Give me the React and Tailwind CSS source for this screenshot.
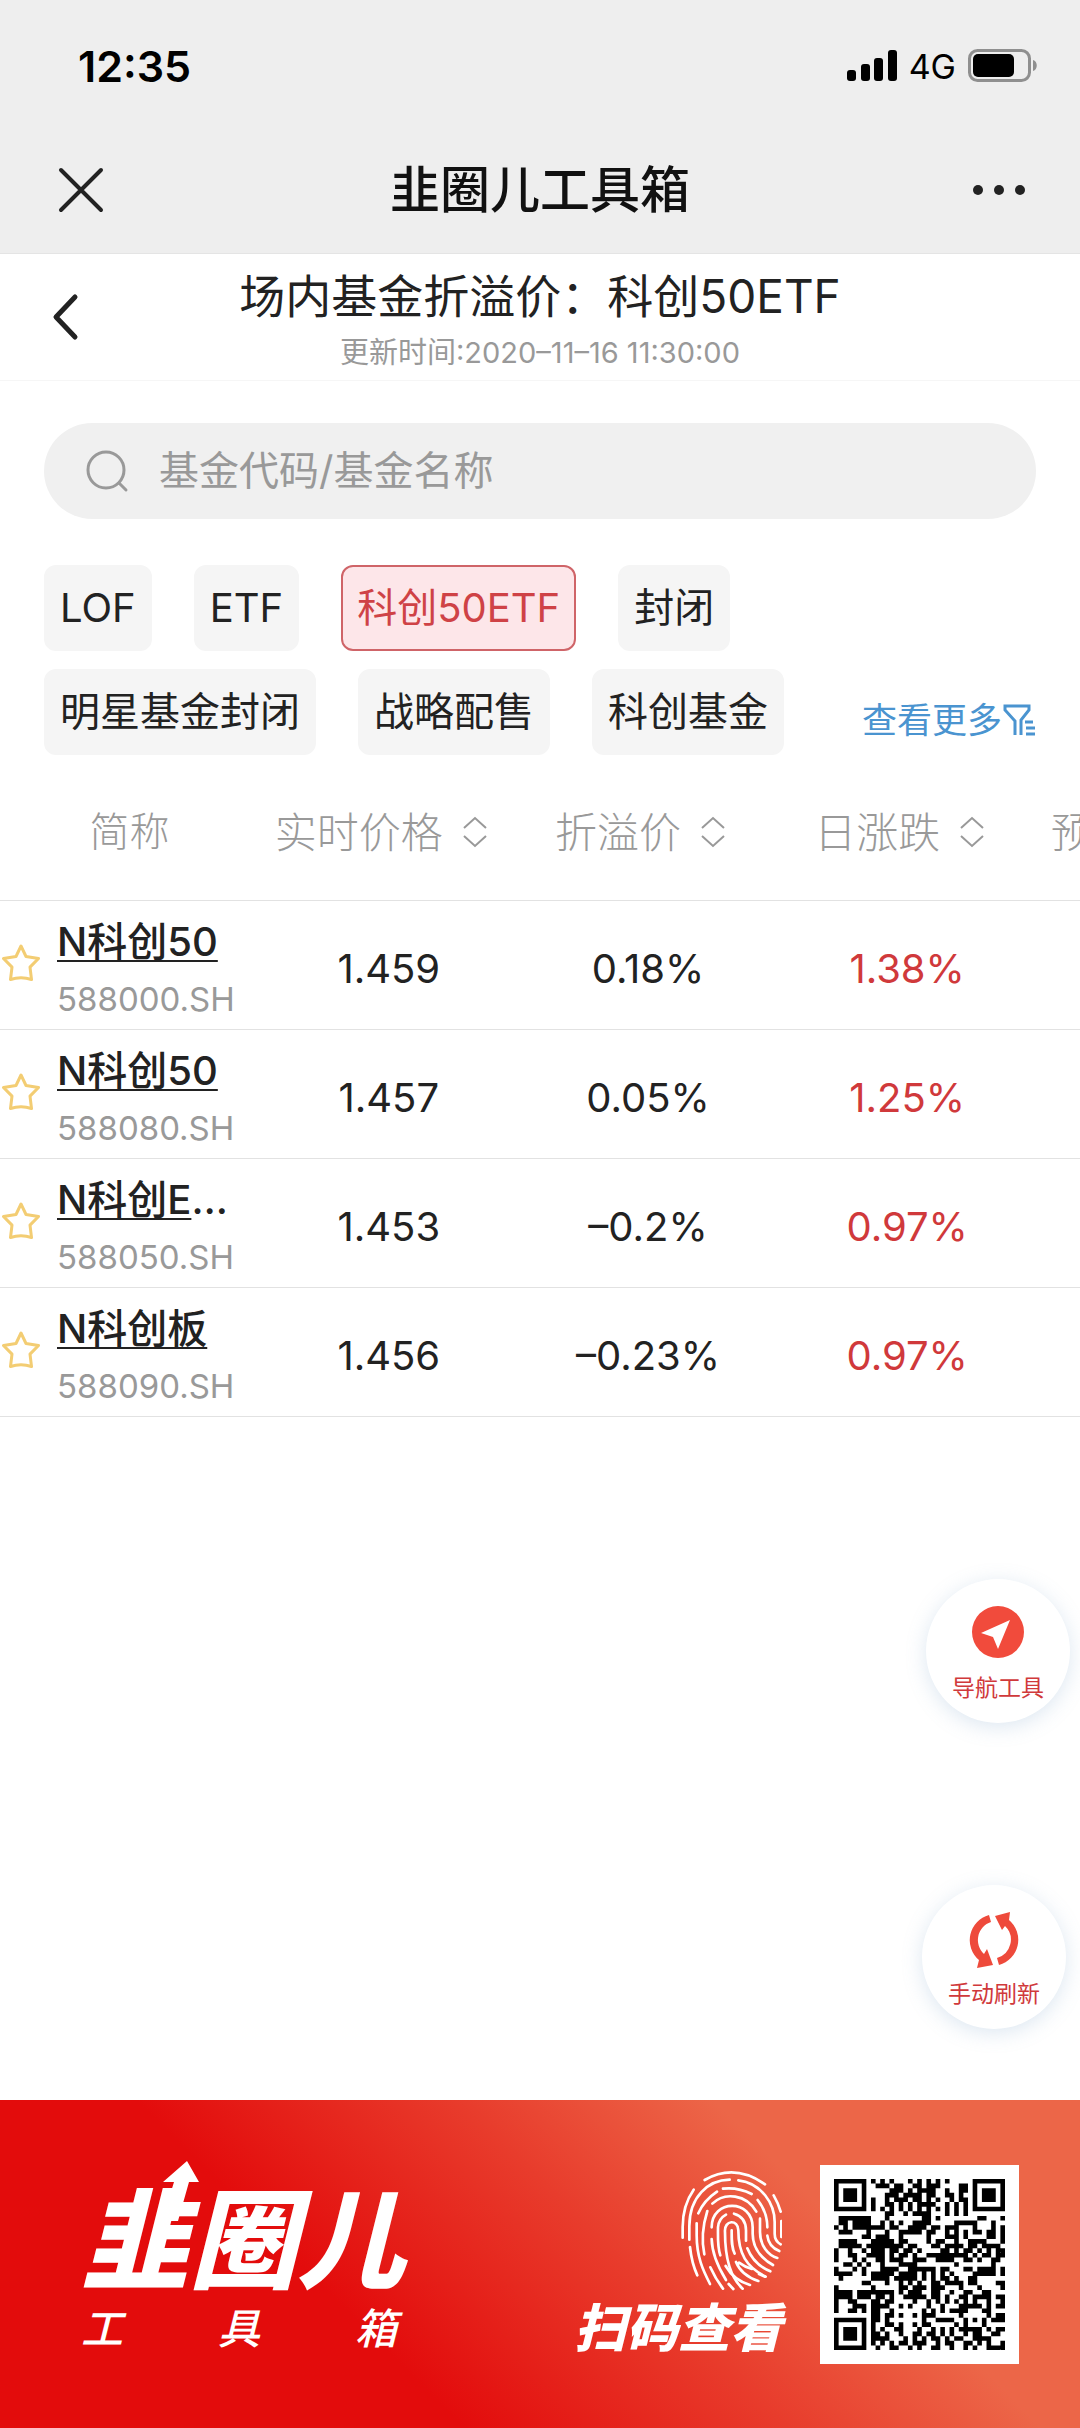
import { useState } from 'react'

const categories = ['LOF', 'ETF', '科创50ETF', '封闭', '明星基金封闭', '战略配售', '科创基金']

const columns = ['实时价格', '折溢价', '日涨跌']

const funds = [
  { name: 'N科创50', code: '588000.SH', price: '1.459', premium: '0.18%', change: '1.38%' },
  { name: 'N科创50', code: '588080.SH', price: '1.457', premium: '0.05%', change: '1.25%' },
  { name: 'N科创ETF', code: '588050.SH', price: '1.453', premium: '–0.2%', change: '0.97%' },
  { name: 'N科创板', code: '588090.SH', price: '1.456', premium: '–0.23%', change: '0.97%' },
]

const qrRows = [
  '#######.#.#.#...#.#.#.#.#.....#######',
  '#.....#..###.##..##.###....##.#.....#',
  '#.###.#.....###.#.####..#..##.#.###.#',
  '#.###.#....###.####.##..##.#..#.###.#',
  '#.###.#.#..#.###.##.#.#..#.##.#.###.#',
  '#.....#.#..##.#.#.####..#.#.#.#.....#',
  '#######.#.#.#.#.#.#.#.#.#.#.#.#######',
  '...........##..#.####...#.#.#........',
  '.#######...#.......##.#........##...#',
  '.##.####..#.#.#..####.....#####...#..',
  '#.#.#######.##..####.##.###...#...#.#',
  '.###...#...#..#####.##..#.#.#.##.##.#',
  '......##.###..#.....#...###.#....##.#',
  '.####...#####.##....#.##..#..####...#',
  '.#####.########.##...##.####.##.####.',
  '#..#..#.###.##.##.#....##.#.##.#.#.##',
  '#..##..####.#.##.#..#########.#.##.##',
  '#...#.#..##.###..###..####..##.#..##.',
  '..##.#.#..#...####........#.......#..',
  '#...#.#...####..######.##...##.####.#',
  '####..#.#####.####.#.#.#.#....#####.#',
  '.#......####.#####.#.#.##.#..##......',
  '......##...#..#.#.#..##.####.##....##',
  '#.......#.....##.###.###...#...#....#',
  '####.########.#.###..##..#..##..##...',
  '####.###.##.#..#####.##.#..##.####.##',
  '#..##...##.##....#..#.#.#.#.#.#..#..#',
  '#...###.####..#.#...#..#...#####.#.##',
  '#..##.#.##..#......#.#.#.####...##...',
  '........##.##.#..#.###.....#.....#.##',
  '#######.##.#.......#..####..#.#.#.###',
  '#.....#.#..##.#..#.##.....#.#...#....',
  '#.###.#.#.#..##...#..#.#.#.#####.#.##',
  '#.###.#.##.#..#..##.##.#.#..#.##..##.',
  '#.###.#.####...#.#.#.##.#.##..####...',
  '#.....#.#.#.#.##.###..#.##..##.#.#..#',
  '#######..#..##..#.#..##..#..#.#..####',
]

function SignalIcon() {
  return (
    <svg className="w-[50px] h-[32px]" viewBox="0 0 50 32" fill="#000">
      <rect x="0" y="20" width="9" height="11" rx="3" />
      <rect x="14" y="14" width="9" height="17" rx="3" />
      <rect x="27" y="8" width="9" height="23" rx="3" />
      <rect x="41" y="0" width="9" height="31" rx="3" />
    </svg>
  )
}

function BatteryIcon() {
  return (
    <svg className="w-[70px] h-[34px]" viewBox="0 0 70 34">
      <rect x="1.5" y="1.5" width="60" height="30" rx="8" fill="none" stroke="#8f8f8f" strokeWidth="3" />
      <rect x="5" y="5" width="41" height="23" rx="5" fill="#000" />
      <path d="M65 11c5 1 5 10 0 11z" fill="#8f8f8f" />
    </svg>
  )
}

function SortIcon() {
  return (
    <svg className="w-6 h-8" viewBox="0 0 24 32" fill="none" stroke="#999" strokeWidth="2">
      <path d="M1 12 12 2l11 10M1 20l11 10 11-10" />
    </svg>
  )
}

function StarIcon() {
  return (
    <svg className="w-[38px] h-[38px]" viewBox="0 0 38 38" fill="none" stroke="#f3cd73" strokeWidth="3" strokeLinejoin="round">
      <path d="M19 2l5 10.500 12.500 2-8.500 8.600 1.500 12.400Q19 32 8.500 35.500L10 23.100 1.500 14.500l12.500-2z" />
    </svg>
  )
}

function FilterIcon() {
  return (
    <svg className="w-[34px] h-8" viewBox="0 0 34 32" fill="none" stroke="#4a94d0" strokeWidth="3">
      <path d="M13 31V17L3 6V2h24v4l-8 10v15" />
      <path d="M23 18h8M24 24h9M24 30h9" />
    </svg>
  )
}

function NavIcon() {
  return (
    <svg className="w-[54px] h-[54px]" viewBox="0 0 54 54">
      <circle cx="27" cy="27" r="26" fill="#f14b3c" />
      <path d="M39 15 10 28l12 4 5 12z" fill="#fff" />
    </svg>
  )
}

function RefreshIcon() {
  return (
    <svg className="w-[54px] h-[58px]" viewBox="0 0 54 58" fill="#ee4a3b">
      <path d="M22 4A26 26 0 0 0 12 49L10 57l16-3-6-16-3 5A19 19 0 0 1 24 11z" />
      <path d="M32 54A26 26 0 0 0 42 9l1-8-15 4 7 14 3-4A19 19 0 0 1 30 47z" />
    </svg>
  )
}

function FingerprintIcon() {
  return (
    <svg className="w-[102px] h-[122px]" viewBox="66 56 306 366" fill="none" stroke="#fff" strokeWidth="8" strokeLinecap="round">
      <path d="M140 89Q230 38 321 102" />
      <path d="M94 268V228C94 140 150 89 215 88" />
      <path d="M241 90C310 98 350 160 350 215V250Q350 272 368 282" />
      <path d="M74 262V230Q74 165 107 118" />
      <path d="M347 135Q360 157 368 184M370 212V260" />
      <path d="M121 189Q138 150 177 124M195 115Q240 110 281 131M299 149Q328 185 328 231" />
      <path d="M163 160C200 124 265 132 295 184" />
      <path d="M139 312C130 270 136 220 148 182" />
      <path d="M161 231C161 145 284 145 284 231V250C284 300 320 330 345 344" />
      <path d="M187 315C178 290 180 265 180 231Q182 205 204 193" />
      <path d="M228 190Q264 200 264 240V271" />
      <path d="M306 205V245C306 285 330 315 358 323" />
      <path d="M328 256Q332 290 364 302" />
      <path d="M116 219V255C116 320 135 360 156 401" />
      <path d="M96 290Q101 338 118 375" />
      <path d="M161 266C162 310 180 350 204 389" />
      <path d="M157 351Q172 385 195 415" />
      <path d="M254 415C215 380 201 320 201 245C198 207 241 207 241 240C241 310 265 350 323 379" />
      <path d="M221 240C221 270 220 290 230 310" />
      <path d="M268 294C280 325 305 350 337 363" />
      <path d="M203 347Q228 390 276 404M234 335Q250 375 301 392M243 337Q260 350 282 356M212 401 226 416M303 371l18 8" />
    </svg>
  )
}

function QrCode() {
  const d = qrRows
    .map((row, y) => row.split('').map((cell, x) => (cell === '#' ? `M${x} ${y}h1v1h-1z` : '')).join(''))
    .join('')

  return (
    <svg className="w-[171px] h-[171px]" viewBox="0 0 37 37" role="img" aria-label="二维码">
      <path d={d} />
    </svg>
  )
}

function FundRow({ fund }) {
  const [starred, setStarred] = useState(false)

  return (
    <tr className="h-[129px] border-b border-[#e2e2e2]">
      <td className="p-0">
        <div className="pt-[13px] flex items-center">
          <button type="button" aria-label="自选" aria-pressed={starred} onClick={() => setStarred(!starred)} className="w-[57px] pb-4 pl-[2px]">
            <StarIcon />
          </button>
          <div className="w-[184px]">
            <a href="#" className="block truncate text-[40px] leading-[56px] font-medium underline underline-offset-4 decoration-2">
              {fund.name}
            </a>
            <div className="text-[33px] leading-[58px] text-[#999]">{fund.code}</div>
          </div>
        </div>
      </td>
      <td className="p-0 pt-2 text-center text-[40px]">{fund.price}</td>
      <td className="p-0 pt-2 text-center text-[40px]">{fund.premium}</td>
      <td className="p-0 pt-2 text-center text-[40px] text-[#d0393b]">{fund.change}</td>
      <td></td>
    </tr>
  )
}

function App() {
  const [active, setActive] = useState('科创50ETF')
  const [keyword, setKeyword] = useState('')

  return (
    <div className="bg-white text-[#222] overflow-hidden font-[Inter,'Noto_Sans_CJK_SC',sans-serif]">
      {/* Status bar and title */}
      <header className="bg-[#eeeeee] border-b border-[#e4e4e4]">
        <div className="h-[132px] pl-[78px] pr-[42px] flex items-center justify-between text-black">
          <span className="text-[43px] font-semibold">12:35</span>
          <div className="flex items-center gap-3">
            <SignalIcon />
            <span className="text-[34px]">4G</span>
            <BatteryIcon />
          </div>
        </div>
        <div className="h-[121px] px-[54px] pb-[5px] flex items-center justify-between">
          <button type="button" aria-label="关闭">
            <svg className="w-[54px] h-[54px]" viewBox="0 0 54 54" fill="none" stroke="#222" strokeWidth="4" strokeLinecap="round">
              <path d="M7 7l40 40M47 7 7 47" />
            </svg>
          </button>
          <h1 className="text-[50px] leading-[60px] font-medium text-[#111]">韭圈儿工具箱</h1>
          <button type="button" aria-label="更多">
            <svg className="w-[54px] h-[12px]" viewBox="0 0 54 12" fill="#222">
              <circle cx="6" cy="6" r="5" />
              <circle cx="27" cy="6" r="5" />
              <circle cx="48" cy="6" r="5" />
            </svg>
          </button>
        </div>
      </header>

      {/* Page heading */}
      <div className="h-[127px] px-[48px] flex items-center border-b border-[#f6f6f6]">
        <button type="button" aria-label="返回" className="w-9">
          <svg className="w-9 h-[54px]" viewBox="0 0 36 54" fill="none" stroke="#222" strokeWidth="5" strokeLinecap="round" strokeLinejoin="round">
            <path d="M27 7 8 27l19 20" />
          </svg>
        </button>
        <div className="flex-1 pt-2 pr-9 text-center">
          <h2 className="text-[46px] leading-[64px]">场内基金折溢价：科创50ETF</h2>
          <p className="text-[29px] leading-[50px] text-[#999]">更新时间:2020–11–16 11:30:00</p>
        </div>
      </div>

      {/* Search */}
      <div className="px-[44px] pt-[42px]">
        <label className="h-[96px] px-10 flex items-center gap-[29px] rounded-full bg-[#f0f0f0]">
          <svg className="w-[46px] h-[46px]" viewBox="0 0 46 46" fill="none" stroke="#999" strokeWidth="3" strokeLinecap="round">
            <circle cx="22" cy="22" r="18" />
            <path d="M35 35l7 7" />
          </svg>
          <input
            type="text"
            aria-label="搜索基金"
            value={keyword}
            onChange={(e) => setKeyword(e.target.value)}
            placeholder="基金代码/基金名称"
            className="flex-1 bg-transparent text-[40px] outline-none placeholder:text-[#999]"
          />
        </label>
      </div>

      {/* Categories */}
      <div className="pt-[46px] px-[44px] flex items-end justify-between">
        <div className="w-[748px] flex flex-wrap gap-x-[42px] gap-y-[18px]">
          {categories.map((name) => (
            <button
              key={name}
              type="button"
              onClick={() => setActive(name)}
              className={
                name === active
                  ? 'h-[86px] px-[14px] rounded-xl border-2 border-[#cf6468] bg-[#fde6e9] text-[40px] text-[#cf4246]'
                  : 'h-[86px] px-[14px] rounded-xl border-2 border-[#f5f5f5] bg-[#f5f5f5] text-[40px]'
              }
            >
              {name}
            </button>
          ))}
        </div>
        <a href="#" className="h-[70px] flex items-center whitespace-nowrap text-[35px] text-[#4a94d0]">
          查看更多
          <FilterIcon />
        </a>
      </div>

      {/* Fund table */}
      <table className="w-full table-fixed border-collapse">
        <colgroup>
          <col className="w-[24%]" />
          <col className="w-[24%]" />
          <col className="w-[24%]" />
          <col className="w-[24%]" />
          <col />
        </colgroup>
        <thead>
          <tr className="h-[145px] border-b border-[#e2e2e2] text-[#999]">
            <th className="p-0 pt-[10px] text-[40px] font-light">简称</th>
            {columns.map((title) => (
              <th key={title} className="p-0 pt-[10px] pr-[16px] font-light">
                <button type="button" className="inline-flex items-center gap-[20px] text-[42px] whitespace-nowrap">
                  {title}
                  <SortIcon />
                </button>
              </th>
            ))}
            <th className="p-0 pt-[10px] pl-[14px] text-left text-[42px] font-light whitespace-nowrap overflow-hidden">预</th>
          </tr>
        </thead>
        <tbody>
          {funds.map((fund) => (
            <FundRow key={fund.code} fund={fund} />
          ))}
        </tbody>
      </table>

      {/* Round shortcuts */}
      <div className="pt-[162px] pb-[71px] pr-[10px] flex flex-col items-end gap-[162px]">
        <button type="button" className="w-[144px] h-[144px] pt-2 rounded-full bg-white shadow-[0_4px_20px_rgba(120,160,200,0.25)] flex flex-col items-center justify-center gap-3">
          <NavIcon />
          <span className="text-[23px] leading-[34px] text-[#d0393b]">导航工具</span>
        </button>
        <button type="button" className="w-[144px] h-[144px] mr-1 pt-2 rounded-full bg-white shadow-[0_4px_20px_rgba(120,160,200,0.25)] flex flex-col items-center justify-center gap-2">
          <RefreshIcon />
          <span className="text-[23px] leading-[34px] text-[#d0393b]">手动刷新</span>
        </button>
      </div>

      {/* Banner */}
      <footer className="h-[329px] pl-[81px] pr-[61px] flex items-center justify-between text-white bg-[linear-gradient(45deg,#e30c0c_33%,#e83c2c_56%,#ec6648_74%)]">
        <div className="relative w-[316px] pt-[26px] pb-[8px]">
          <svg className="absolute left-[82px] top-0 w-[36px] h-[60px]" viewBox="0 0 36 60" fill="#fff">
            <path d="M24 0 36 21H26L15 60H-1L11 21H0z" />
          </svg>
          <div className="text-[108px] leading-[108px] font-black italic whitespace-nowrap">韭圈儿</div>
          <div className="pt-1 flex justify-between text-[42px] leading-[60px] font-medium italic">
            <span>工</span>
            <span>具</span>
            <span>箱</span>
          </div>
        </div>
        <div className="flex items-center gap-[38px]">
          <div className="flex flex-col items-end gap-2">
            <FingerprintIcon />
            <div className="text-[52px] leading-[60px] font-black italic">扫码查看</div>
          </div>
          <div className="w-[199px] h-[199px] bg-white flex items-center justify-center">
            <QrCode />
          </div>
        </div>
      </footer>
    </div>
  )
}

export default App
